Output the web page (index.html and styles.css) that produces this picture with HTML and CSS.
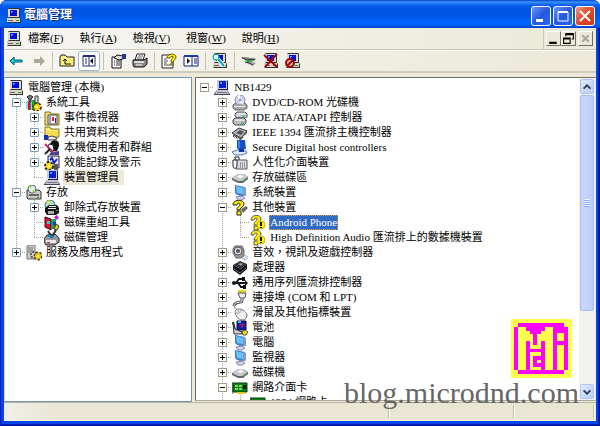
FILE: index.html
```html
<!DOCTYPE html>
<html lang="zh-Hant">

<head>
    <meta charset="utf-8">
    <title>電腦管理</title>
    <link rel="stylesheet" href="styles.css">
</head>

<body>
    <svg class="symbols" aria-hidden="true">
        <symbol id="computer" viewBox="0 0 16 16">
            <path d="M2 1l1-1h10l1 1v9H3l-1-1z" fill="#333" />
            <path d="M2 1h11v8H2z" fill="#dcd8cc" />
            <path d="M4 2h7v6H4z" fill="#0010d0" />
            <path d="M5 3h2v1H6v1H5z" fill="#6af" />
            <path d="M1 10h13l1 1v4H2l-1-1z" fill="#333" />
            <path d="M1 10h13v4H1z" fill="#d8d4c8" />
            <path d="M2 12h5v1H2z" fill="#666" />
            <path d="M10 12h3v1h-3z" fill="#0a0" />
        </symbol>
        <symbol id="laptop" viewBox="0 0 16 16">
            <path d="M3 0h10l1 1v9H4z" fill="#223" />
            <path d="M3 0h10v9H3z" fill="#ccccdc" />
            <path d="M5 1h7v7H5z" fill="#0020d8" />
            <path d="M6 2h2v2H6z" fill="#5ad" />
            <path d="M3 10h10l3 4v1H0v-1z" fill="#445" />
            <path d="M3 10h10l2 4H1z" fill="#c4c4d4" />
            <path d="M3 12h10v1H3z" fill="#778" />
        </symbol>
        <symbol id="tools" viewBox="0 0 16 16">
            <path d="M1 2l3-2 3 2-2 2v3H3V4z" fill="#777" stroke="#222" />
            <path d="M2 7h3v8H2z" fill="#d01818" />
            <path d="M6 5h3v10H6z" fill="#18a838" />
            <path d="M9 1h3v9H9z" fill="#ddd" stroke="#333" />
            <path d="M1 6v8M5 7v8" stroke="#0bd" />
            <circle cx="11" cy="12" r="3" fill="none" stroke="#554400" stroke-width="4" stroke-dasharray="2 1" />
            <circle cx="11" cy="12" r="2" fill="#fff" stroke="#ffd800" stroke-width="2" />
        </symbol>
        <symbol id="events" viewBox="0 0 16 16">
            <path d="M1 2h5l1 2h8v11H1z" fill="#f7e470" stroke="#7a6a10" />
            <path d="M4 5h9v9H4z" fill="#fff" stroke="#444" />
            <path d="M5 6h2v7H5z" fill="#99b" />
            <path d="M8 7h2v4H8z" fill="#d22" />
            <path d="M11 8h1v5h-1z" fill="#22c" />
        </symbol>
        <symbol id="share" viewBox="0 0 16 16">
            <path d="M1 2h5l1 2h8v8H1z" fill="#ffec70" stroke="#807020" />
            <path d="M2 6h12v5H2z" fill="#f8dc50" />
            <path d="M0 10h4v5H0z" fill="#1030c0" />
            <path d="M4 12l4-1 5 2v1l-4 1H4z" fill="#f0e8d8" stroke="#444" />
        </symbol>
        <symbol id="users" viewBox="0 0 16 16">
            <path d="M7 2c3-3 9-2 8 4l-2 5H8L5 6z" fill="#111" />
            <path d="M5 4l4 1 1 5-3 2-3-4z" fill="#fff" stroke="#222" />
            <path d="M7 12l8-1v4H5z" fill="#448" />
            <path d="M1 4l9 9" stroke="#c03070" stroke-width="2" />
            <path d="M1 14l5-5" stroke="#222" stroke-width="2" />
        </symbol>
        <symbol id="perf" viewBox="0 0 16 16">
            <path d="M4 1h11v12H4z" fill="#e8e8f8" stroke="#223" />
            <path d="M6 5l2-2 2 5 3-4" fill="none" stroke="#1020d0" stroke-width="2" />
            <circle cx="5" cy="11" r="3" fill="none" stroke="#332a00" stroke-width="4" stroke-dasharray="2 1" />
            <circle cx="5" cy="11" r="2" fill="#fff" stroke="#ffe000" stroke-width="2" />
            <path d="M10 9h4v6h-4z" fill="#555" />
        </symbol>
        <symbol id="storage" viewBox="0 0 16 16">
            <path d="M1 5h12l2 2v7H2l-1-1z" fill="#c8c8c8" stroke="#333" />
            <path d="M3 9h10v2H3z" fill="#666" />
            <circle cx="6" cy="4" r="4" fill="#d8f0e8" stroke="#667" />
            <path d="M6 4l-3-2 2-2zM6 4l3 2-2 2z" fill="#8e3" />
            <circle cx="6" cy="4" r="1" fill="#fff" />
            <path d="M11 12h2v1h-2z" fill="#0a0" />
        </symbol>
        <symbol id="removable" viewBox="0 0 16 16">
            <circle cx="6" cy="5" r="5" fill="#a0e8e0" stroke="#466" />
            <path d="M6 5L2 2l3-2z" fill="#f6e020" />
            <path d="M5 5h8l2 3v5l-3 2H3l-2-3V8z" fill="#181818" />
            <path d="M4 8h8v1H4zM5 6h7v1H5z" fill="#eee" />
            <path d="M4 11h6v3H4z" fill="#aaa" />
            <path d="M12 10h2v1h-2z" fill="#0d0" />
        </symbol>
        <symbol id="defrag" viewBox="0 0 16 16">
            <path d="M1 2l6 2v11l-6-3z" fill="#e01040" stroke="#400" />
            <path d="M7 4h5v10H7z" fill="#18a050" />
            <path d="M3 6h3v3H3z" fill="#20d0d0" />
            <path d="M9 7h3v3H9z" fill="#2030e0" />
            <path d="M10 2l3-2 2 3-3 2z" fill="#c020d0" />
            <path d="M12 9l3 2-2 4-3-1z" fill="#e8d010" stroke="#333" />
        </symbol>
        <symbol id="diskmgmt" viewBox="0 0 16 16">
            <path d="M3 5l8-1 4 4v4l-4 3H2l-2-3V9z" fill="#999" stroke="#222" />
            <path d="M2 10h10v3H2z" fill="#e8e8e8" />
            <path d="M4 1l4 6M12 0L7 8" stroke="#333" stroke-width="2" />
            <path d="M4 6l6 1" stroke="#18c" stroke-width="2" />
            <path d="M3 12h3v1H3z" fill="#c22" />
        </symbol>
        <symbol id="services" viewBox="0 0 16 16">
            <path d="M1 1l3-1h5v14H1z" fill="#ccc" stroke="#777" />
            <path d="M2 3h5M2 5h5M2 7h5" stroke="#777" />
            <circle cx="8" cy="10" r="3" fill="#ddd" stroke="#555" stroke-width="2" stroke-dasharray="2 1" />
            <circle cx="12" cy="11" r="3" fill="none" stroke="#554400" stroke-width="3" stroke-dasharray="2 1" />
            <circle cx="12" cy="11" r="2" fill="#fff" stroke="#f0c800" stroke-width="2" />
        </symbol>
        <symbol id="dvd" viewBox="0 0 16 16">
            <path d="M1 10l3-2h9l2 2v3l-3 2H3l-2-2z" fill="#aaa" stroke="#666" />
            <path d="M2 11h11v1H2z" fill="#eee" />
            <circle cx="8" cy="5" r="5" fill="#d4d4f4" stroke="#88a" />
            <path d="M8 5L5 1l3-1zM8 5l4 3-2 2z" fill="#fff" />
            <circle cx="8" cy="5" r="1" fill="#779" />
        </symbol>
        <symbol id="ide" viewBox="0 0 16 16">
            <path d="M5 2h8l2 2v3l-2 1H5L3 6V4z" fill="#ccc" stroke="#555" />
            <path d="M3 8h9l2 2v3l-2 2H3l-2-2v-3z" fill="#bbb" stroke="#444" />
            <path d="M5 4h8M3 10h9" stroke="#fff" />
            <path d="M9 13h3M10 6h3" stroke="#2a5" />
        </symbol>
        <symbol id="firewire" viewBox="0 0 16 16">
            <path d="M0 8l7-5 8 3-6 7z" fill="#b8b8b8" stroke="#333" />
            <path d="M4 8l4-3 4 2-3 3z" fill="#555" />
            <path d="M1 9v3l8 3 6-7V6l-6 7z" fill="#555" />
            <path d="M2 11l2 2M5 12l2 2M11 12l2-2" stroke="#ccc" />
        </symbol>
        <symbol id="sdhost" viewBox="0 0 16 16">
            <path d="M5 0h8l1 9-7 1-2-2z" fill="#1850c8" />
            <path d="M6 1h2v7H6z" fill="#3a80f0" />
            <path d="M0 12l5-2 9 1 1 2-5 2H3z" fill="#dce8ff" stroke="#4878c8" />
            <path d="M7 9h5v3H7z" fill="#103898" />
        </symbol>
        <symbol id="hid" viewBox="0 0 16 16">
            <path d="M4 5h11v9H4z" fill="#ddd" stroke="#555" />
            <path d="M8 8h6M8 10h6M8 12h6" stroke="#555" stroke-dasharray="1 1" />
            <path d="M1 5h4v6c0 3-4 3-4 0z" fill="#fff" stroke="#222" />
            <path d="M3 5V2h4v3" fill="none" stroke="#222" />
        </symbol>
        <symbol id="disk" viewBox="0 0 16 16">
            <path d="M0 8l6-4h6l4 3v2l-5 4H6L0 10z" fill="#666" />
            <path d="M0 8l6-4h6l4 3-6 4H6z" fill="#c8c8c8" />
            <path d="M5 7l3-2 4 1-3 2z" fill="#fff" />
            <path d="M11 10h2v1h-2z" fill="#2c2" />
        </symbol>
        <symbol id="monitor" viewBox="0 0 16 16">
            <path d="M3 0l10 2v9L5 10 3 8z" fill="#4080d0" />
            <path d="M4 1l7 2v6L5 8z" fill="#68c0fc" />
            <path d="M11 2l3 1v8l-3-1z" fill="#8898c0" />
            <path d="M7 10h4v2H7z" fill="#7080a8" />
            <path d="M4 12l6-1 3 2-3 2H6z" fill="#d0d4e8" stroke="#8088a8" />
        </symbol>
        <symbol id="question" viewBox="0 0 16 16">
            <path d="M9 9l5-3 2 2-5 5z" fill="#666" />
            <path d="M1 5c0-6 11-6 11-1 0 3-4 3-4 6H5c0-4 3-3 3-6 0-2-3-1-3 1z" fill="#ffee00" stroke="#222" />
            <path d="M5 11h4v4H5z" fill="#ffee00" stroke="#222" />
        </symbol>
        <symbol id="unknown" viewBox="0 0 16 16">
            <path d="M1 5c0-6 10-6 10-1 0 3-4 3-4 6H4c0-4 3-3 3-6 0-2-3-1-3 1z" fill="#ffee00" stroke="#555" />
            <path d="M4 11h4v4H4z" fill="#ffee00" stroke="#555" />
            <circle cx="11" cy="10" r="4" fill="#ffee00" stroke="#c8b800" />
            <path d="M10 7h2v4h-2zM10 12h2v1h-2z" fill="#111" />
        </symbol>
        <symbol id="sound" viewBox="0 0 16 16">
            <path d="M3 1h7l2 4v6l-3 2H4L1 8V4z" fill="#999" stroke="#666" />
            <circle cx="6" cy="6" r="4" fill="#ddd" stroke="#555" />
            <circle cx="6" cy="6" r="2" fill="#555" />
            <path d="M10 14c3 0 4-2 4-4M12 15c2 0 3-2 4-4" fill="none" stroke="#88a8e8" />
        </symbol>
        <symbol id="cpu" viewBox="0 0 16 16">
            <path d="M1 5l7-4 7 3-6 5z" fill="#333" />
            <path d="M1 5v5l7 5 7-6V4L9 9z" fill="#111" />
            <path d="M6 4l3-1 2 1-2 2z" fill="#999" />
            <path d="M2 9l6 4 6-5" fill="none" stroke="#bbb" stroke-dasharray="1 1" />
        </symbol>
        <symbol id="usb" viewBox="0 0 16 16">
            <path d="M1 8h13M4 8l3-4h4M6 8l3 4h3" fill="none" stroke="#111" stroke-width="2" />
            <circle cx="2" cy="8" r="2" fill="#111" />
            <path d="M13 5l3 3-3 3z" fill="#111" />
            <path d="M10 2h3v4h-3zM11 10h3v4h-3z" fill="#111" />
        </symbol>
        <symbol id="port" viewBox="0 0 16 16">
            <path d="M6 0h8v3H6z" fill="#e8d820" />
            <path d="M6 3h8l-1 5H8z" fill="#eee" stroke="#555" />
            <path d="M10 8v3c0 2-8 0-8 5" fill="none" stroke="#555" stroke-width="3" />
            <path d="M10 8v3c0 2-8 0-8 5" fill="none" stroke="#eee" />
        </symbol>
        <symbol id="mouse" viewBox="0 0 16 16">
            <path d="M5 5C4 2 1 4 3 0" fill="none" stroke="#777" />
            <path d="M4 5c4-3 10 1 11 5 0 6-6 6-9 3C4 11 2 7 4 5z" fill="#f0f0f0" stroke="#777" />
            <path d="M4 8c3 1 5-1 6-3M6 5l1 2" fill="none" stroke="#999" />
        </symbol>
        <symbol id="battery" viewBox="0 0 16 16">
            <path d="M5 1h9v9H5z" fill="#1018c0" stroke="#111" />
            <path d="M7 5h6M10 3v5" stroke="#e02020" />
            <path d="M6 1h3v2H6z" fill="#38c0f0" />
            <path d="M1 2l2 8 8 3" fill="none" stroke="#222" stroke-width="2" />
            <path d="M1 2l2 7 7 3v2H2z" fill="#ccc" stroke="#333" />
            <path d="M10 12l3-2 3 2-2 3h-3z" fill="#f4d818" stroke="#554" />
        </symbol>
        <symbol id="network" viewBox="0 0 16 16">
            <path d="M0 2h1v12H0z" fill="#888" />
            <path d="M1 3h14v9H1z" fill="#108018" stroke="#053a08" />
            <path d="M3 5h3v2H3zM7 5h3v2H7zM3 8h3v2H3zM7 8h3v2H7z" fill="#70e050" />
            <path d="M11 5h3v4h-3z" fill="#111" />
            <path d="M5 12h8v2H5z" fill="#e8c820" />
        </symbol>
        <symbol id="arrow" viewBox="0 0 16 16">
            <path d="M2 8l4-4v3h8v2H6v3z" fill="#10d8e8" stroke="#045868" />
        </symbol>
        <symbol id="arrow-off" viewBox="0 0 16 16">
            <path d="M15 8l-5-5v3H4v4h6v3z" fill="#aca899" />
        </symbol>
        <symbol id="folder-up" viewBox="0 0 16 16">
            <path d="M1 13V4l1-2h4l2 2h7v9z" fill="#fff078" stroke="#222" />
            <path d="M6 6v5h6M4 8l2-2 2 2" fill="none" stroke="#111" />
        </symbol>
        <symbol id="pane-left" viewBox="0 0 16 16">
            <path d="M2 3h12v10H2z" fill="#fff" stroke="#223070" />
            <path d="M2 2h12v2H2z" fill="#223070" />
            <path d="M8 3v10" stroke="#223070" />
            <path d="M4 6h2M4 8h2M4 10h2" stroke="#223070" />
            <path d="M12 5v6L9 8z" fill="#111" />
        </symbol>
        <symbol id="pane-right" viewBox="0 0 16 16">
            <path d="M1 3h14v10H1z" fill="#fff" stroke="#112288" />
            <path d="M1 2h14v2H1z" fill="#2038b0" />
            <path d="M9 3v10" stroke="#112288" />
            <path d="M11 6h3M11 8h3M11 10h3" stroke="#112288" />
            <path d="M4 5v6l3-3z" fill="#111" />
        </symbol>
        <symbol id="props" viewBox="0 0 16 16">
            <path d="M2 4h9v11H2z" fill="#fff" stroke="#111" />
            <path d="M4 8h1M6 8h4M4 10h1M6 10h4M4 12h1M6 12h4" stroke="#333" />
            <path d="M4 5l3-3 6 1v3l-4 1z" fill="#ddd" stroke="#111" />
            <path d="M12 1h4v5h-4z" fill="#223a90" />
        </symbol>
        <symbol id="print" viewBox="0 0 16 16">
            <path d="M5 1h8l-2 6H3z" fill="#fff" stroke="#222" />
            <path d="M6 3h5M5 5h5" stroke="#666" />
            <path d="M1 7h11l3-2v6l-3 3H2l-1-2z" fill="#888" stroke="#111" />
            <path d="M2 8h10v2H2z" fill="#ddd" />
            <path d="M4 12h6" stroke="#fff" />
        </symbol>
        <symbol id="help" viewBox="0 0 16 16">
            <path d="M1 2h11v13H1z" fill="#fff" stroke="#222" />
            <path d="M3 6h3M3 8h4M3 10h3M3 12h7" stroke="#555" />
            <path d="M6 5c0-5 9-5 9-1 0 3-3 3-3 5h-2c0-4 2-3 2-5 0-1-3-1-3 1zM10 10h2v2h-2z" fill="#ffe810" stroke="#6a5c00" />
        </symbol>
        <symbol id="scan" viewBox="0 0 16 16">
            <use href="#computer" width="16" height="16" />
            <circle cx="4" cy="4" r="3" fill="#cff" stroke="#088" />
            <path d="M6 6l6 7" stroke="#fff" stroke-width="4" />
            <path d="M6 6l6 7" stroke="#08a8c8" stroke-width="2" />
        </symbol>
        <symbol id="update" viewBox="0 0 16 16">
            <path d="M0 4h5l10 2-2 2H6z" fill="#888" />
            <path d="M3 9l6-2 6 3-3 3z" fill="#aaa" />
            <path d="M1 5l5 2 8-1M4 9l4 1 4 2" fill="none" stroke="#333" />
            <path d="M6 7h4v2H6z" fill="#10b030" />
        </symbol>
        <symbol id="uninstall" viewBox="0 0 16 16">
            <use href="#computer" width="16" height="16" />
            <path d="M1 2l13 12M14 1L2 14" stroke="#a00808" stroke-width="2" />
        </symbol>
        <symbol id="disable" viewBox="0 0 16 16">
            <use href="#computer" width="16" height="16" />
            <circle cx="5" cy="10" r="4" fill="#d8b0b0" stroke="#a00808" stroke-width="2" />
            <path d="M2 13l6-6" stroke="#a00808" stroke-width="2" />
        </symbol>
    </svg>

    <div class="window">
        <header class="titlebar">
            <svg class="icon"><use href="#computer" /></svg>
            <h1>電腦管理</h1>
            <button class="caption-btn" aria-label="最小化"><svg viewBox="0 0 18 18"><path d="M4 12h7v3H4z" fill="#fff" /></svg></button>
            <button class="caption-btn" aria-label="最大化"><svg viewBox="0 0 18 18"><path d="M4 5h10v9H4z" fill="none" stroke="#fff" /><path d="M4 4h10v2H4z" fill="#fff" /></svg></button>
            <button class="caption-btn close" aria-label="關閉"><svg viewBox="0 0 18 18"><path d="M4 4l10 10M14 4L4 14" stroke="#fff" stroke-width="2" /></svg></button>
        </header>

        <nav class="menubar">
            <svg class="icon"><use href="#computer" /></svg>
            <div class="menus">
                <button>檔案(<u>F</u>)</button>
                <button>執行(<u>A</u>)</button>
                <button>檢視(<u>V</u>)</button>
                <button>視窗(<u>W</u>)</button>
                <button>說明(<u>H</u>)</button>
            </div>
            <div class="mdi">
                <button aria-label="最小化子視窗"><svg viewBox="0 0 12 12"><path d="M2 9h7v2H2z" fill="#000" /></svg></button>
                <button aria-label="還原子視窗"><svg viewBox="0 0 12 12"><path d="M3 1h8v6H9V6h1V3H4v1H3zM1 5h7v6H1zM2 7v3h5V7z" fill="#000" fill-rule="evenodd" /></svg></button>
                <button class="off" aria-label="關閉子視窗"><svg viewBox="0 0 12 12"><path d="M3 3l6 6M9 3L3 9" stroke="#aca899" stroke-width="2" /></svg></button>
            </div>
        </nav>

        <div class="toolbar">
            <button aria-label="上一頁"><svg class="icon"><use href="#arrow" /></svg></button>
            <button aria-label="下一頁" disabled><svg class="icon"><use href="#arrow-off" /></svg></button>
            <span class="sep"></span>
            <button aria-label="上一層"><svg class="icon"><use href="#folder-up" /></svg></button>
            <button class="active" aria-label="主控台樹狀目錄"><svg class="icon"><use href="#pane-left" /></svg></button>
            <span class="sep"></span>
            <button aria-label="內容"><svg class="icon"><use href="#props" /></svg></button>
            <button aria-label="列印"><svg class="icon"><use href="#print" /></svg></button>
            <span class="sep"></span>
            <button aria-label="說明"><svg class="icon"><use href="#help" /></svg></button>
            <button aria-label="動作窗格"><svg class="icon"><use href="#pane-right" /></svg></button>
            <span class="sep"></span>
            <button aria-label="掃描硬體變更"><svg class="icon"><use href="#scan" /></svg></button>
            <span class="sep"></span>
            <button aria-label="更新驅動程式"><svg class="icon"><use href="#update" /></svg></button>
            <button aria-label="解除安裝"><svg class="icon"><use href="#uninstall" /></svg></button>
            <button aria-label="停用"><svg class="icon"><use href="#disable" /></svg></button>
        </div>

        <main class="workspace">
            <section class="pane console">
                <div class="row"><svg class="icon"><use href="#computer" /></svg><span class="label">電腦管理 (本機)</span></div>
                <ul class="tree">
                    <li>
                        <div class="row"><span class="node"><button class="minus" aria-label="摺疊"></button></span><svg class="icon"><use href="#tools" /></svg><span class="label">系統工具</span></div>
                        <ul class="tree">
                            <li class="row"><span class="node"><button class="plus" aria-label="展開"></button></span><svg class="icon"><use href="#events" /></svg><span class="label">事件檢視器</span></li>
                            <li class="row"><span class="node"><button class="plus" aria-label="展開"></button></span><svg class="icon"><use href="#share" /></svg><span class="label">共用資料夾</span></li>
                            <li class="row"><span class="node"><button class="plus" aria-label="展開"></button></span><svg class="icon"><use href="#users" /></svg><span class="label">本機使用者和群組</span></li>
                            <li class="row"><span class="node"><button class="plus" aria-label="展開"></button></span><svg class="icon"><use href="#perf" /></svg><span class="label">效能記錄及警示</span></li>
                            <li class="row"><span class="node"></span><svg class="icon"><use href="#laptop" /></svg><span class="label current">裝置管理員</span></li>
                        </ul>
                    </li>
                    <li>
                        <div class="row"><span class="node"><button class="minus" aria-label="摺疊"></button></span><svg class="icon"><use href="#storage" /></svg><span class="label">存放</span></div>
                        <ul class="tree">
                            <li class="row"><span class="node"><button class="plus" aria-label="展開"></button></span><svg class="icon"><use href="#removable" /></svg><span class="label">卸除式存放裝置</span></li>
                            <li class="row"><span class="node"></span><svg class="icon"><use href="#defrag" /></svg><span class="label">磁碟重組工具</span></li>
                            <li class="row"><span class="node"></span><svg class="icon"><use href="#diskmgmt" /></svg><span class="label">磁碟管理</span></li>
                        </ul>
                    </li>
                    <li class="row"><span class="node"><button class="plus" aria-label="展開"></button></span><svg class="icon"><use href="#services" /></svg><span class="label">服務及應用程式</span></li>
                </ul>
            </section>

            <section class="pane devices">
                <div class="device-list">
                    <div class="row"><span class="node"><button class="minus" aria-label="摺疊"></button></span><svg class="icon"><use href="#laptop" /></svg><span class="label">NB1429</span></div>
                    <ul class="tree">
                        <li class="row"><span class="node"><button class="plus" aria-label="展開"></button></span><svg class="icon"><use href="#dvd" /></svg><span class="label">DVD/CD-ROM 光碟機</span></li>
                        <li class="row"><span class="node"><button class="plus" aria-label="展開"></button></span><svg class="icon"><use href="#ide" /></svg><span class="label">IDE ATA/ATAPI 控制器</span></li>
                        <li class="row"><span class="node"><button class="plus" aria-label="展開"></button></span><svg class="icon"><use href="#firewire" /></svg><span class="label">IEEE 1394 匯流排主機控制器</span></li>
                        <li class="row"><span class="node"><button class="plus" aria-label="展開"></button></span><svg class="icon"><use href="#sdhost" /></svg><span class="label">Secure Digital host controllers</span></li>
                        <li class="row"><span class="node"><button class="plus" aria-label="展開"></button></span><svg class="icon"><use href="#hid" /></svg><span class="label">人性化介面裝置</span></li>
                        <li class="row"><span class="node"><button class="plus" aria-label="展開"></button></span><svg class="icon"><use href="#disk" /></svg><span class="label">存放磁碟區</span></li>
                        <li class="row"><span class="node"><button class="plus" aria-label="展開"></button></span><svg class="icon"><use href="#monitor" /></svg><span class="label">系統裝置</span></li>
                        <li>
                            <div class="row"><span class="node"><button class="minus" aria-label="摺疊"></button></span><svg class="icon"><use href="#question" /></svg><span class="label">其他裝置</span></div>
                            <ul class="tree">
                                <li class="row"><span class="node"></span><svg class="icon"><use href="#unknown" /></svg><span class="label selected">Android Phone</span></li>
                                <li class="row"><span class="node"></span><svg class="icon"><use href="#unknown" /></svg><span class="label">High Definition Audio 匯流排上的數據機裝置</span></li>
                            </ul>
                        </li>
                        <li class="row"><span class="node"><button class="plus" aria-label="展開"></button></span><svg class="icon"><use href="#sound" /></svg><span class="label">音效，視訊及遊戲控制器</span></li>
                        <li class="row"><span class="node"><button class="plus" aria-label="展開"></button></span><svg class="icon"><use href="#cpu" /></svg><span class="label">處理器</span></li>
                        <li class="row"><span class="node"><button class="plus" aria-label="展開"></button></span><svg class="icon"><use href="#usb" /></svg><span class="label">通用序列匯流排控制器</span></li>
                        <li class="row"><span class="node"><button class="plus" aria-label="展開"></button></span><svg class="icon"><use href="#port" /></svg><span class="label">連接埠 (COM 和 LPT)</span></li>
                        <li class="row"><span class="node"><button class="plus" aria-label="展開"></button></span><svg class="icon"><use href="#mouse" /></svg><span class="label">滑鼠及其他指標裝置</span></li>
                        <li class="row"><span class="node"><button class="plus" aria-label="展開"></button></span><svg class="icon"><use href="#battery" /></svg><span class="label">電池</span></li>
                        <li class="row"><span class="node"><button class="plus" aria-label="展開"></button></span><svg class="icon"><use href="#monitor" /></svg><span class="label">電腦</span></li>
                        <li class="row"><span class="node"><button class="plus" aria-label="展開"></button></span><svg class="icon"><use href="#monitor" /></svg><span class="label">監視器</span></li>
                        <li class="row"><span class="node"><button class="plus" aria-label="展開"></button></span><svg class="icon"><use href="#disk" /></svg><span class="label">磁碟機</span></li>
                        <li>
                            <div class="row"><span class="node"><button class="minus" aria-label="摺疊"></button></span><svg class="icon"><use href="#network" /></svg><span class="label">網路介面卡</span></div>
                            <ul class="tree">
                                <li class="row"><span class="node"></span><svg class="icon"><use href="#network" /></svg><span class="label">1394 網路卡</span></li>
                            </ul>
                        </li>
                    </ul>
                </div>
                <div class="scrollbar">
                    <button aria-label="向上捲動"><svg viewBox="0 0 14 14"><path d="M3 9l4-4 4 4" fill="none" stroke="#2a3c60" stroke-width="2" /></svg></button>
                    <div class="track">
                        <div class="thumb"><span class="grip"></span></div>
                    </div>
                    <button aria-label="向下捲動"><svg viewBox="0 0 14 14"><path d="M3 5l4 4 4-4" fill="none" stroke="#2a3c60" stroke-width="2" /></svg></button>
                </div>
            </section>
        </main>

        <footer class="statusbar">
            <span class="cell"></span>
            <span class="cell medium"></span>
            <span class="cell small"></span>
        </footer>

        <svg class="stamp" viewBox="0 0 183 177" shape-rendering="crispEdges" role="img" aria-label="Mci">
            <path d="M0 0h183v177H0z" fill="#ffff4d" />
            <path d="M22 11h137v12h12v130h-12v12H22v-12H9V23h13z" fill="#ff00ff" />
            <path d="M22 23h22v12h12v9h11v34h11V44h12v-9h12V23h23v130h-23V66H90v23H56V66H44v87H22z" fill="#ffff4d" />
            <path d="M56 100h34v53H56z" fill="#ffff4d" />
            <path d="M67 111h23v12H78v10h12v11H67z" fill="#ff00ff" />
            <path d="M137 43h22v23h-22zM137 78h22v75h-22z" fill="#ffff4d" />
        </svg>
        <div class="watermark">blog.microdnd.com</div>
    </div>
</body>

</html>
```
FILE: styles.css
```css
* {
    box-sizing: border-box;
}

body {
    margin: 0;
    background: #fff;
    color: #000;
    font-family: "Liberation Serif", "Noto Sans CJK TC", serif;
    font-size: 11px;
    line-height: 15px;
}

button {
    margin: 0;
    padding: 0;
    border: none;
    background: none;
    color: inherit;
    font: inherit;
}

.symbols {
    display: none;
}

.icon {
    width: 16px;
    height: 16px;
    flex: none;
}

.window {
    position: relative;
    display: flex;
    flex-direction: column;
    height: 100vh;
    padding: 0 4px 5px;
    border-radius: 7px 7px 0 0;
    background: #0046e8;
    box-shadow: inset 1px 0 #0019c8, inset -1px -1px #00108c, inset -2px -2px #0024c4;
}

/* title bar */
.titlebar {
    display: flex;
    align-items: center;
    gap: 2px;
    height: 28px;
    flex: none;
    margin: 0 -4px;
    padding: 3px 5px 0 6px;
    border-radius: 7px 7px 0 0;
    background: linear-gradient(#0040c8 0, #3a93ff 2px, #0a63ee 5px, #0054e3 9px, #0055e5 15px, #0066ff 22px, #0062f5 25px, #003fc6 28px);
}

.titlebar h1 {
    flex: 1;
    margin: 0;
    color: #fff;
    font-size: 12px;
    font-weight: bold;
    text-shadow: 1px 1px #0a2a80;
}

.caption-btn {
    width: 20px;
    height: 20px;
    border: 1px solid #fff;
    border-radius: 3px;
    background: linear-gradient(135deg, #6c98f8, #2458e0 50%, #2a68f8);
}

.caption-btn svg {
    display: block;
}

.caption-btn.close {
    background: linear-gradient(135deg, #f09878, #e0482a 50%, #c83818);
}

/* menu bar */
.menubar {
    display: flex;
    align-items: center;
    height: 22px;
    flex: none;
    padding-left: 2px;
    border-bottom: 1px solid #cbc8b6;
    background: linear-gradient(90deg, #f6f5f2, #ece9d8);
}

.menus {
    display: flex;
    align-self: stretch;
    flex: 1;
    border-right: 1px solid #cbc8b6;
}

.menus button {
    padding: 0 8px;
}

.menus button:first-child {
    padding-left: 6px;
}

.mdi {
    display: flex;
    padding: 0 3px 0 2px;
}

.mdi button {
    width: 15px;
    height: 15px;
    border: 1px solid;
    border-color: #fff #716f64 #716f64 #fff;
    background: #ece9d8;
}

.mdi button.off {
    margin-left: 2px;
}

.mdi svg {
    display: block;
}

/* toolbar */
.toolbar {
    display: flex;
    align-items: center;
    height: 23px;
    flex: none;
    padding-left: 1px;
    border-top: 1px solid #fff;
    border-bottom: 2px solid #d0cdbc;
    background: linear-gradient(90deg, #f6f5f0, #ece9d8);
}

.toolbar button {
    display: flex;
    align-items: center;
    justify-content: center;
    width: 22px;
    height: 20px;
}

.toolbar .active {
    border: 1px solid #98b5d8;
    border-radius: 3px;
    background: #fff;
}

.sep {
    width: 1px;
    height: 18px;
    margin: 0 3px;
    background: #c5c2b0;
}

/* panes */
.workspace {
    display: grid;
    grid-template-columns: 47fr 100fr;
    gap: 3px;
    flex: 1;
    min-height: 0;
    padding-top: 4px;
    background: #ece9d8;
}

.pane {
    min-width: 0;
    min-height: 0;
    overflow: hidden;
    background: #fff;
}

.console {
    padding: 2px 0 0 3px;
    border: 1px solid #7393b5;
    border-left-color: #d8d5c8;
}

.devices {
    display: flex;
    margin-bottom: 1px;
    border: 1px solid;
    border-color: #716f64 #f1efe2 #aca899 #716f64;
}

.device-list {
    flex: 1;
    min-width: 0;
    padding: 2px 0 0 4px;
    overflow: hidden;
}

.row {
    display: flex;
    align-items: center;
    height: 15px;
    white-space: nowrap;
}

.label {
    margin-left: 3px;
    padding: 0 1px;
}

.current {
    padding-right: 5px;
    background: #ece9d8;
}

.selected {
    outline: 1px dotted #e8a050;
    outline-offset: -1px;
    background: #316ac5;
    color: #fff;
}

.tree {
    margin: 0;
    padding-left: 18px;
    list-style: none;
    background: repeating-linear-gradient(#a8a698 0 1px, transparent 1px 2px) 22px 0 / 1px calc(100% - 8px) no-repeat;
}

.console > .tree {
    padding-left: 4px;
    background-position-x: 8px;
}

.node {
    display: flex;
    align-items: center;
    width: 14px;
    height: 15px;
    flex: none;
    background: repeating-linear-gradient(90deg, #a8a698 0 1px, transparent 1px 2px) 4px 7px / 10px 1px no-repeat;
}

.node button {
    width: 9px;
    height: 9px;
    border: 1px solid #a09c88;
    background: linear-gradient(#000, #000) center / 5px 1px no-repeat #fff;
}

.node .plus {
    background: linear-gradient(#000, #000) center / 5px 1px no-repeat, linear-gradient(#000, #000) center / 1px 5px no-repeat #fff;
}

.console .node button {
    border-color: #7898b5;
    border-radius: 1px;
}

/* scroll bar */
.scrollbar {
    display: flex;
    flex-direction: column;
    gap: 1px;
    width: 16px;
    padding: 1px;
    background: #f3f2ec;
}

.scrollbar button {
    height: 15px;
    border: 1px solid #b0c4f0;
    border-radius: 2px;
    background: linear-gradient(135deg, #e0e9ff, #b8ccf8);
}

.scrollbar svg {
    display: block;
}

.track {
    flex: 1;
}

.thumb {
    display: flex;
    align-items: center;
    justify-content: center;
    height: 75%;
    border: 1px solid #a8bdf0;
    border-radius: 2px;
    background: linear-gradient(90deg, #cad8fd, #bccdfa);
}

.grip {
    width: 6px;
    height: 8px;
    background: repeating-linear-gradient(#eef4fe 0 1px, #8cb0f8 1px 2px);
}

/* status bar */
.statusbar {
    display: flex;
    height: 19px;
    flex: none;
    padding: 2px 2px 2px 0;
    border-top: 1px solid #b8b5a4;
    border-bottom: 1px solid #fff8d0;
    background: linear-gradient(90deg, #f0efea, #e9e6d4 50px);
}

.cell {
    flex: 1;
    border-right: 1px solid #c5c2b0;
    box-shadow: 1px 0 #fff;
}

.cell.medium {
    flex: 0 0 125px;
}

.cell.small {
    flex: 0 0 80px;
}

/* overlays */
.stamp {
    position: absolute;
    right: 28px;
    bottom: 48px;
    width: 61px;
    height: 59px;
}

.watermark {
    position: absolute;
    right: 21px;
    bottom: 15px;
    color: #666;
    font-size: 30px;
    line-height: 36px;
}
```
